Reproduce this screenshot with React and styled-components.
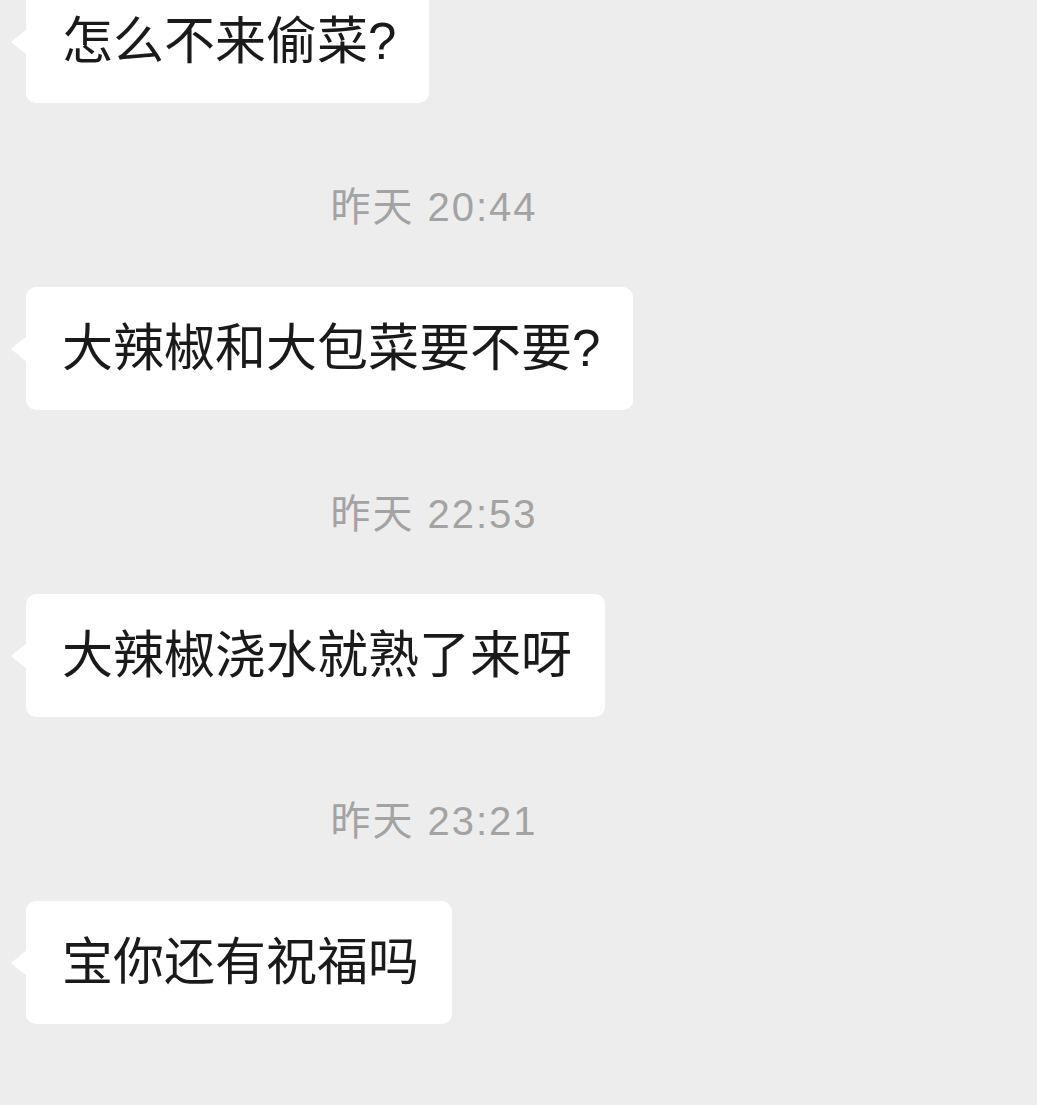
import React from "react";
import styled, { createGlobalStyle } from "styled-components";

const Global = createGlobalStyle`
  html, body {
    margin: 0;
    padding: 0;
    background: #ededed;
    overflow: hidden;
  }
  body {
    font-family: "Liberation Sans", "Noto Sans CJK SC", sans-serif;
  }
`;

const Chat = styled.div`
  display: flex;
  flex-direction: column;
  width: 868px;
  margin-top: -20px;
  height: 1125px;
`;

const Row = styled.div`
  display: flex;
  padding-left: 26px;
`;

const Bubble = styled.div`
  position: relative;
  background: #fff;
  border-radius: 10px;
  padding: 26px 33px 26px 36px;
  font-size: 51px;
  line-height: 71px;
  color: #1a1a1a;
  white-space: nowrap;

  &::before {
    content: "";
    position: absolute;
    left: -15px;
    top: 50%;
    width: 0;
    height: 0;
    margin-top: -13px;
    border-top: 13px solid transparent;
    border-bottom: 13px solid transparent;
    border-right: 16px solid #fff;
  }
`;

const Time = styled.div`
  text-align: center;
  font-size: 40px;
  line-height: 56px;
  letter-spacing: 2px;
  color: #a3a3a3;
  margin: 76px 0 52px;
`;

const messages = [
  { text: "怎么不来偷菜?" },
  { time: "昨天 20:44", text: "大辣椒和大包菜要不要?" },
  { time: "昨天 22:53", text: "大辣椒浇水就熟了来呀" },
  { time: "昨天 23:21", text: "宝你还有祝福吗" },
];

export default function App() {
  return (
    <>
      <Global />
      <Chat>
        {messages.map((m, i) => (
          <React.Fragment key={i}>
            {m.time && <Time>{m.time}</Time>}
            <Row>
              <Bubble>{m.text}</Bubble>
            </Row>
          </React.Fragment>
        ))}
      </Chat>
    </>
  );
}
